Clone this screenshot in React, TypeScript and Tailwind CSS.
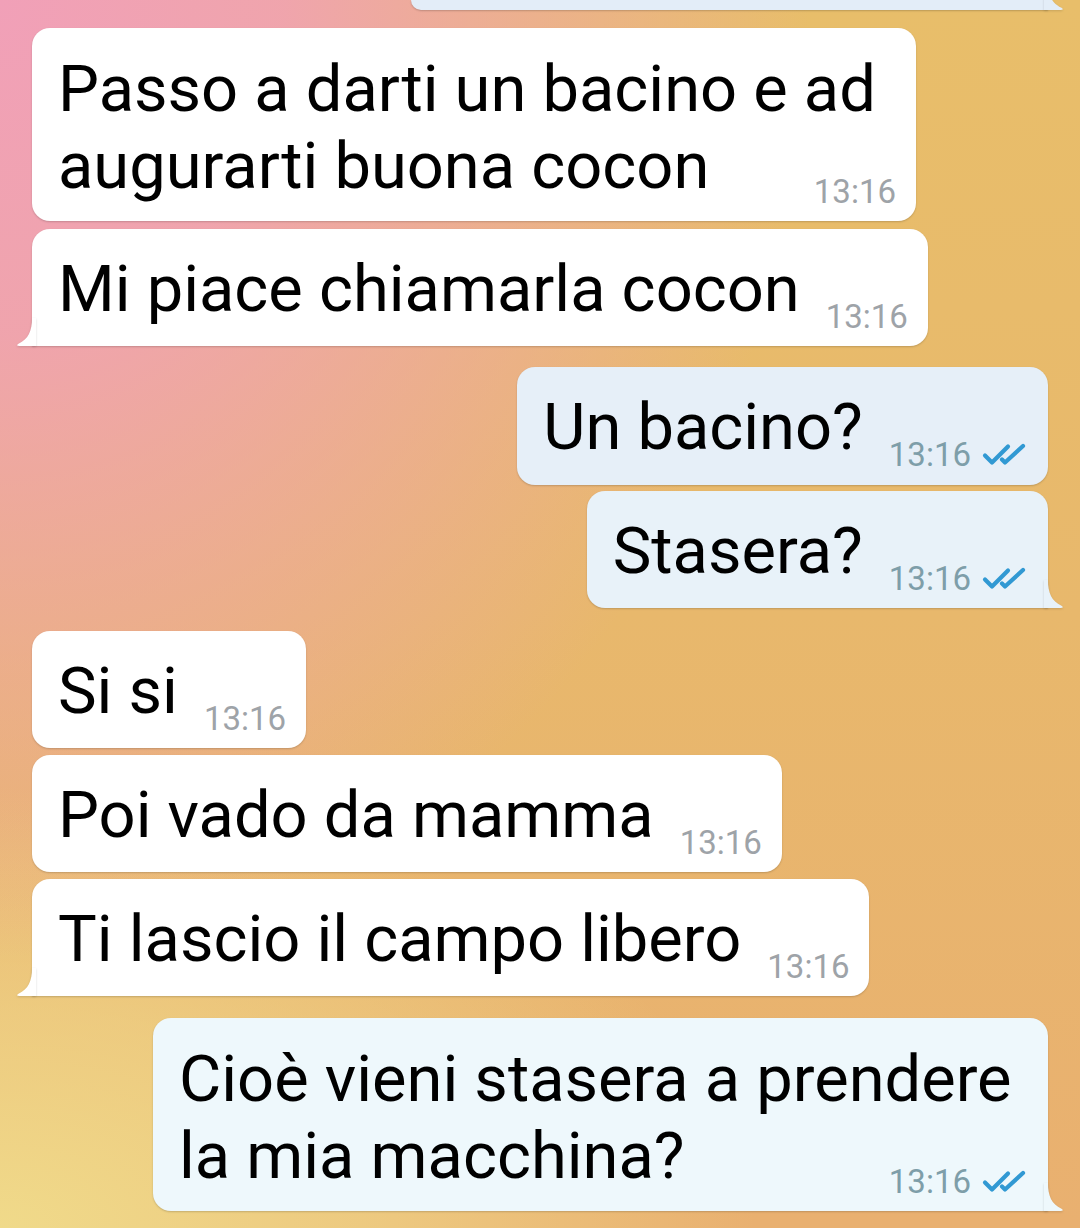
import React from "react"

// tail drawn at the bottom corner of the last bubble in a group
const Tail = ({ out, fill }: { out?: boolean; fill: string }) => (
    <svg
        width="20"
        height="28"
        viewBox="0 0 20 28"
        className={
            out
                ? "absolute bottom-0 right-[-16px] -scale-x-100 drop-shadow-[0_1px_1px_rgba(0,0,0,0.14)]"
                : "absolute bottom-0 left-[-16px] drop-shadow-[0_1px_1px_rgba(0,0,0,0.14)]"
        }
    >
        <path d="M16 0 C16 13 12.5 21 2.5 25.8 C0.5 26.8 1 28 3 28 H20 V0 Z" fill={fill} />
    </svg>
)

const Checks = () => (
    <svg width="46" height="24" viewBox="0 0 46 24" fill="none" stroke="#3199d3" strokeWidth="4.2" strokeLinecap="round" strokeLinejoin="round" className="ml-[11px]">
        <path d="M3 12.5 L10 19.5 L26 3.5" />
        <path d="M20 16.5 L23 19.5 L41 3" />
    </svg>
)

const Time = ({ out }: { out?: boolean }) => (
    <span className="flex items-center shrink-0">
        <span className={out ? "text-[33px] leading-none text-[#7e9ea9]" : "text-[33px] leading-none text-[#9ea3a8]"}>13:16</span>
        {out && <Checks />}
    </span>
)

const App = () => {
    return (
        <div
            className="w-[1080px] h-[1228px] overflow-hidden flex flex-col px-[32px] text-black bg-[radial-gradient(ellipse_75%_78%_at_0%_0%,#f1a0b8_0%,rgba(241,160,184,0.85)_35%,rgba(241,160,184,0)_100%),radial-gradient(ellipse_70%_36%_at_0%_100%,#f0da8a_0%,rgba(240,218,138,0.6)_50%,rgba(240,218,138,0)_100%),linear-gradient(to_bottom,#e8be6a_0%,#e8b86c_50%,#e9b070_100%)]"
            style={{ fontFamily: "Roboto, 'Noto Sans', sans-serif" }}
        >
            {/* partial outgoing bubble cut off at the top */}
            <div className="relative self-end w-[637px] h-[10px] bg-[#e3edf8] rounded-bl-[18px] shadow-[0_1px_2px_rgba(0,0,0,0.2)]">
                <Tail out fill="#e3edf8" />
            </div>

            {/* incoming group */}
            <div className="self-start mt-[18px] w-[884px] bg-white rounded-[18px] shadow-[0_1px_2px_rgba(0,0,0,0.18)] pl-[26px] pr-[20px] pt-[23px] pb-[16px] grid">
                <p className="col-start-1 row-start-1 text-[65px] leading-[77px] whitespace-nowrap">
                    Passo a darti un bacino e ad
                    <br />
                    augurarti buona cocon
                </p>
                <span className="col-start-1 row-start-1 self-end justify-self-end mb-[-3px]">
                    <Time />
                </span>
            </div>

            <div className="relative self-start mt-[8px] bg-white rounded-[18px] rounded-bl-none shadow-[0_1px_2px_rgba(0,0,0,0.18)] pl-[26px] pr-[20px] pt-[23px] pb-[19px] flex items-end">
                <p className="text-[65px] leading-[75px] whitespace-nowrap">Mi piace chiamarla cocon</p>
                <span className="ml-[26px] mb-[-6px]"><Time /></span>
                <Tail fill="#ffffff" />
            </div>

            {/* outgoing group */}
            <div className="self-end mt-[21px] bg-[#e6eff8] rounded-[18px] shadow-[0_1px_2px_rgba(0,0,0,0.18)] pl-[26px] pr-[20px] pt-[23px] pb-[20px] flex items-end">
                <p className="text-[65px] leading-[75px] whitespace-nowrap">Un bacino?</p>
                <span className="ml-[26px] mb-[-6px]"><Time out /></span>
            </div>

            <div className="relative self-end mt-[6px] bg-[#e8f2f9] rounded-[18px] rounded-br-none shadow-[0_1px_2px_rgba(0,0,0,0.18)] pl-[26px] pr-[20px] pt-[23px] pb-[19px] flex items-end">
                <p className="text-[65px] leading-[75px] whitespace-nowrap">Stasera?</p>
                <span className="ml-[26px] mb-[-6px]"><Time out /></span>
                <Tail out fill="#e8f2f9" />
            </div>

            {/* incoming group */}
            <div className="self-start mt-[23px] bg-white rounded-[18px] shadow-[0_1px_2px_rgba(0,0,0,0.18)] pl-[26px] pr-[20px] pt-[23px] pb-[19px] flex items-end">
                <p className="text-[65px] leading-[75px] whitespace-nowrap">Si si</p>
                <span className="ml-[26px] mb-[-6px]"><Time /></span>
            </div>

            <div className="self-start mt-[7px] bg-white rounded-[18px] shadow-[0_1px_2px_rgba(0,0,0,0.18)] pl-[26px] pr-[20px] pt-[23px] pb-[19px] flex items-end">
                <p className="text-[65px] leading-[75px] whitespace-nowrap">Poi vado da mamma</p>
                <span className="ml-[26px] mb-[-6px]"><Time /></span>
            </div>

            <div className="relative self-start mt-[7px] bg-white rounded-[18px] rounded-bl-none shadow-[0_1px_2px_rgba(0,0,0,0.18)] pl-[26px] pr-[20px] pt-[23px] pb-[19px] flex items-end">
                <p className="text-[65px] leading-[75px] whitespace-nowrap">Ti lascio il campo libero</p>
                <span className="ml-[26px] mb-[-6px]"><Time /></span>
                <Tail fill="#ffffff" />
            </div>

            {/* outgoing */}
            <div className="relative self-end mt-[22px] w-[895px] bg-[#eef8fc] rounded-[18px] rounded-br-none shadow-[0_1px_2px_rgba(0,0,0,0.18)] pl-[26px] pr-[20px] pt-[23px] pb-[16px] grid">
                <p className="col-start-1 row-start-1 text-[65px] leading-[77px] whitespace-nowrap">
                    Cioè vieni stasera a prendere
                    <br />
                    la mia macchina?
                </p>
                <span className="col-start-1 row-start-1 self-end justify-self-end mb-[-3px]">
                    <Time out />
                </span>
                <Tail out fill="#eef8fc" />
            </div>
        </div>
    )
}

export default App
